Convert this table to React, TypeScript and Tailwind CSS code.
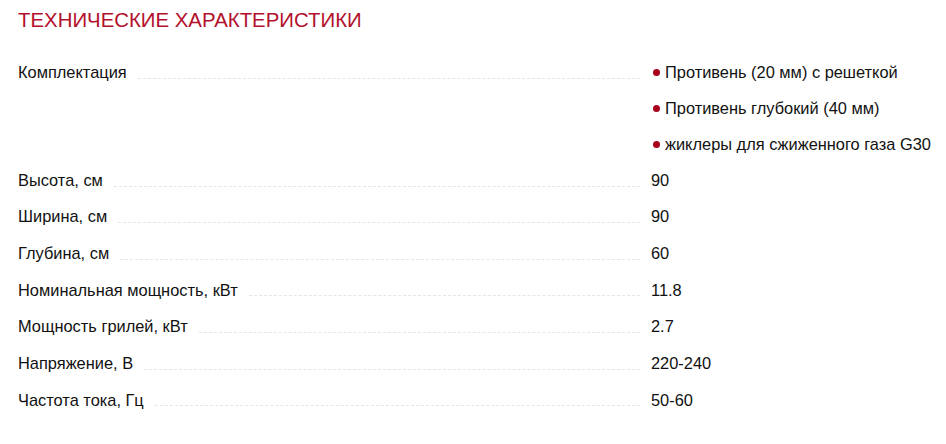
import React from "react";

const specs: { label: string; value: string | string[] }[] = [
  {
    label: "Комплектация",
    value: [
      "Противень (20 мм) с решеткой",
      "Противень глубокий (40 мм)",
      "жиклеры для сжиженного газа G30",
    ],
  },
  { label: "Высота, см", value: "90" },
  { label: "Ширина, см", value: "90" },
  { label: "Глубина, см", value: "60" },
  { label: "Номинальная мощность, кВт", value: "11.8" },
  { label: "Мощность грилей, кВт", value: "2.7" },
  { label: "Напряжение, В", value: "220-240" },
  { label: "Частота тока, Гц", value: "50-60" },
];

function Label({ text }: { text: string }) {
  return (
    <div className="flex w-[622px] shrink-0 items-center h-9">
      <span className="whitespace-nowrap">{text}</span>
      <span className="ml-[11px] flex-1 translate-y-[6px] border-b border-dashed border-[#e6e6e6]" />
    </div>
  );
}

export default function App() {
  return (
    <div
      className="bg-white w-[946px] h-[444px] px-[18px] pt-[7px] text-[16.4px] text-[#111]"
      style={{ fontFamily: '"Liberation Sans", Arial, sans-serif' }}
    >
      <h2 className="text-[20.4px] leading-[26px] text-[#b2102c] uppercase">
        Технические характеристики
      </h2>

      <div className="mt-[21px]">
        {specs.map((s) => (
          <div
            key={s.label}
            className={Array.isArray(s.value) ? "flex" : "flex h-[36.67px] items-start"}
          >
            <Label text={s.label} />
            {Array.isArray(s.value) ? (
              <ul className="ml-[11px] whitespace-nowrap">
                {s.value.map((v) => (
                  <li key={v} className="flex items-center h-9">
                    <span className="ml-[2px] mr-[5px] h-[7px] w-[7px] shrink-0 rounded-full bg-[#a8001f]" />
                    {v}
                  </li>
                ))}
              </ul>
            ) : (
              <div className="ml-[11px] flex items-center h-9 whitespace-nowrap">{s.value}</div>
            )}
          </div>
        ))}
      </div>
    </div>
  );
}
